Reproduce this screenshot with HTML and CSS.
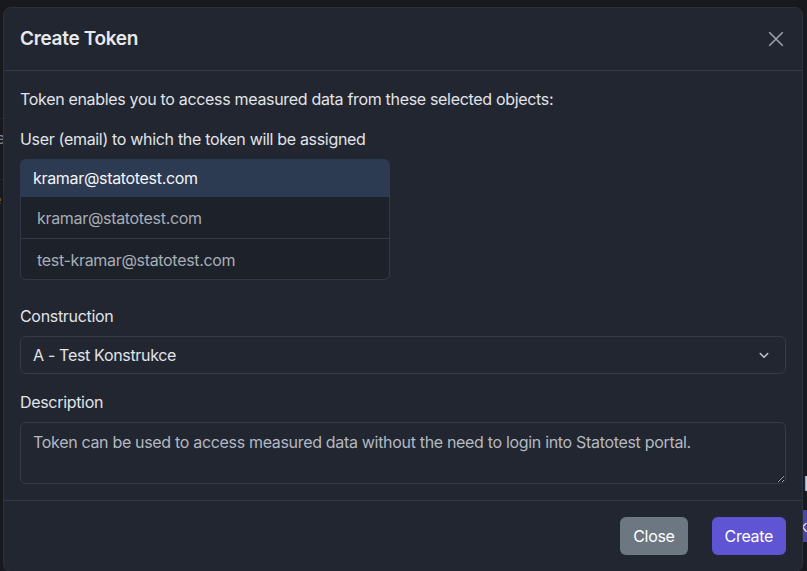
FILE: index.html
```html
<!DOCTYPE html>
<html lang="en">
<head>
    <meta charset="UTF-8">
    <title>Create Token</title>
    <link rel="stylesheet" href="styles.css">
</head>
<body>
<div class="page">
    <div class="page-left">
        <div class="page-row">Name</div>
        <div class="page-row">Code</div>
    </div>
    <div class="page-right">
        <span class="page-title">List</span>
        <span class="page-btn">Token</span>
    </div>
</div>

<div class="modal">
    <div class="modal-header">
        <h5 class="modal-title">Create Token</h5>
        <button class="btn-close" type="button" aria-label="Close">
            <svg width="18" height="18" viewBox="0 0 16 16">
                <path d="M2 2 14 14 M14 2 2 14" stroke="currentColor" stroke-width="1.4" fill="none"/>
            </svg>
        </button>
    </div>
    <div class="modal-body">
        <p class="intro">Token enables you to access measured data from these selected objects:</p>

        <div class="field field-user">
            <label class="form-label">User (email) to which the token will be assigned</label>
            <div class="autocomplete">
                <input class="form-control focused" type="text" value="kramar@statotest.com">
                <ul class="suggestions">
                    <li>kramar@statotest.com</li>
                    <li>test-kramar@statotest.com</li>
                </ul>
            </div>
        </div>

        <div class="field">
            <label class="form-label">Construction</label>
            <div class="form-select">
                <span>A - Test Konstrukce</span>
                <svg width="12" height="12" viewBox="0 0 16 16">
                    <path d="M3 6 8 11 13 6" stroke="currentColor" stroke-width="2" fill="none" stroke-linecap="round" stroke-linejoin="round"/>
                </svg>
            </div>
        </div>

        <div class="field last">
            <label class="form-label">Description</label>
            <textarea class="form-control" rows="2">Token can be used to access measured data without the need to login into Statotest portal.</textarea>
        </div>
    </div>
    <div class="modal-footer">
        <button class="btn btn-secondary" type="button">Close</button>
        <button class="btn btn-primary" type="button">Create</button>
    </div>
</div>
</body>
</html>
```

FILE: styles.css
```css
html,body{
    margin: 0;
    padding: 0;
}
body{
    width: 807px;
    height: 571px;
    overflow: hidden;
    position: relative;
    background: #17191e;
    font-family: Inter, "Liberation Sans", sans-serif;
    font-size: 16px;
    line-height: 1.5;
    letter-spacing: -0.02em;
    color: rgba(255,255,255,0.87);
}

/* page behind the dialog, only the edges show */
.page{
    display: flex;
    justify-content: space-between;
    height: 100%;
}
.page-left{
    padding-top: 118px;
    margin-left: -38px;
}
.page-row{
    height: 60px;
    line-height: 38px;
    border-top: 1px solid #23262d;
    color: #7f858e;
}
.page-right{
    display: flex;
    flex-direction: column;
    align-items: flex-end;
    padding-top: 470px;
    margin-right: -30px;
    gap: 12px;
}
.page-title{
    font-weight: 600;
    font-size: 20px;
    line-height: 28px;
    color: #c9ccd2;
}
.page-btn{
    background: #4a44a6;
    color: #ddd;
    padding: 4px 12px;
    border-radius: 6px;
}

/* dialog */
.modal{
    position: absolute;
    left: 3px;
    top: 7px;
    width: 800px;
    box-sizing: border-box;
    background: #212631;
    border: 1px solid #2b303b;
    border-radius: 8px;
}
.modal-header{
    display: flex;
    align-items: center;
    justify-content: space-between;
    padding: 16px;
    border-bottom: 1px solid #343a47;
}
.modal-title{
    margin: 0;
    font-size: 19px;
    font-weight: 600;
    line-height: 30px;
    color: #e8e9ec;
}
.btn-close{
    background: none;
    border: 0;
    padding: 0;
    margin-right: 1px;
    width: 18px;
    height: 18px;
    color: #9da3ac;
    display: flex;
}
.modal-body{
    padding: 16px;
}
.intro{
    margin: 0 0 16px;
    color: #e2e4e8;
}
.field{
    margin-bottom: 16px;
}
.field-user{
    margin-bottom: 24px;
}
.field.last{
    margin-bottom: 0;
}
.form-label{
    display: block;
    margin-bottom: 8px;
    color: #e2e4e8;
}
.autocomplete{
    width: 370px;
}
.form-control{
    display: block;
    box-sizing: border-box;
    width: 100%;
    padding: 6px 12px;
    font: inherit;
    letter-spacing: inherit;
    line-height: 24px;
    color: #e2e4e8;
    background: #212631;
    border: 1px solid #353b48;
    border-radius: 6px;
    outline: none;
}
.form-control.focused{
    background: #2c3a52;
    border-color: #2c3a52;
    color: #f4f5f7;
    border-radius: 6px 6px 0 0;
}
.suggestions{
    list-style: none;
    margin: 0;
    padding: 0;
    background: #1d212a;
    border: 1px solid #323845;
    border-top: 0;
    border-radius: 0 0 6px 6px;
}
.suggestions li{
    height: 41px;
    box-sizing: border-box;
    padding: 9px 16px 8px;
    line-height: 24px;
    color: #a8aeb7;
}
.suggestions li + li{
    border-top: 1px solid #323845;
}
.form-select{
    display: flex;
    align-items: center;
    justify-content: space-between;
    height: 38px;
    box-sizing: border-box;
    padding: 0 15px 0 12px;
    border: 1px solid #353b48;
    border-radius: 6px;
    color: #e2e4e8;
}
.form-select svg{
    color: #c5c9d0;
}
textarea.form-control{
    height: 62px;
    padding-top: 7px;
    resize: vertical;
    color: #b4b9c1;
    color-scheme: dark;
}
.modal-footer{
    display: flex;
    justify-content: flex-end;
    gap: 24px;
    padding: 16px;
    border-top: 1px solid #343a47;
}
.btn{
    font: inherit;
    letter-spacing: inherit;
    line-height: 24px;
    padding: 6px 12px;
    border: 1px solid transparent;
    border-radius: 6px;
    color: #fff;
}
.btn-secondary{
    background: #6d7782;
}
.btn-primary{
    background: #5f55d4;
}
```
